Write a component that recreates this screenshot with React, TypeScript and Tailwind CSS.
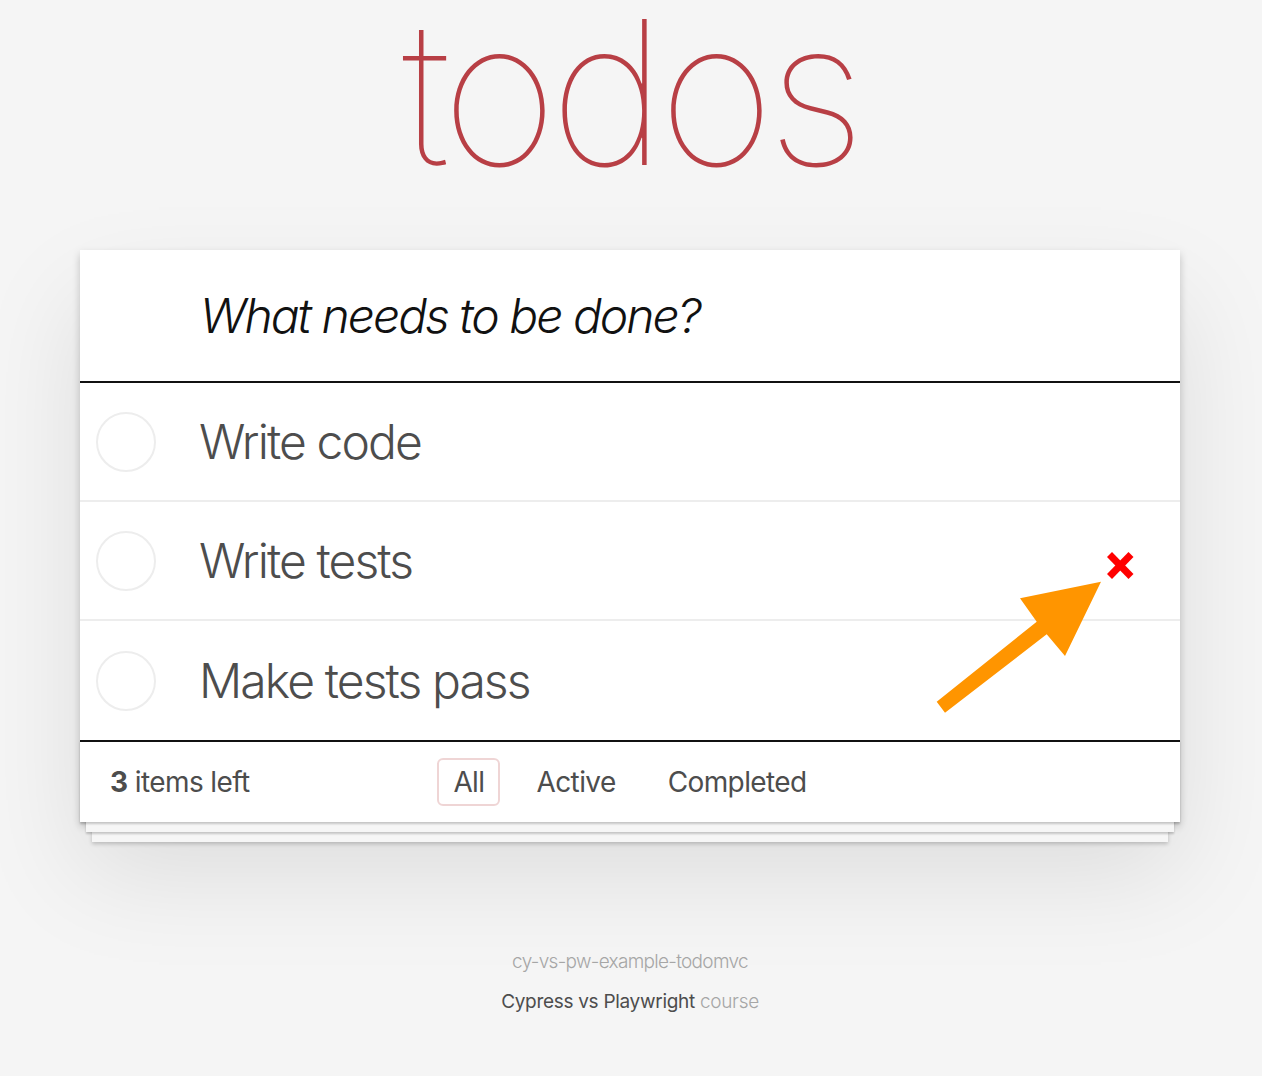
import React from 'react';

const todos = ['Write code', 'Write tests', 'Make tests pass'];

function Toggle() {
  return (
    <svg width="60" height="60" viewBox="0 0 60 60" className="shrink-0">
      <circle cx="30" cy="30" r="29" fill="none" stroke="#ededed" strokeWidth="2" />
    </svg>
  );
}

export default function App() {
  return (
    <div className="min-h-[1076px] bg-[#f5f5f5] font-['Inter','Helvetica_Neue',sans-serif]">
      <div className="relative w-[1260px] pb-[40px]">
        <div className="flex h-[250px] flex-col">
          <h1 className="-mt-[8px] text-center text-[200px] leading-[200px] font-thin text-[#b83f45] tracking-[-7.5px]">
            todos
          </h1>
        </div>

        <section className="mx-auto w-[1100px] bg-white shadow-[0_4px_8px_0_rgba(0,0,0,0.2),0_50px_100px_0_rgba(0,0,0,0.1)]">
          <div className="h-[133px] border-b-2 border-[#111]">
            <input
              className="h-[131px] w-full pl-[120px] pr-8 text-[48px] leading-[131px] italic font-light text-[#111] outline-none placeholder:text-[#111] tracking-[-2px]"
              placeholder="What needs to be done?"
            />
          </div>

          <ul>
            {todos.map((t, i) => (
              <li
                key={t}
                className={`flex h-[119px] items-center pl-[16px] ${i < todos.length - 1 ? 'border-b-2 border-[#ededed]' : ''}`}
              >
                <Toggle />
                <span className="ml-[43px] text-[48px] font-light text-[#4d4d4d] tracking-[-1.9px]">{t}</span>
              </li>
            ))}
          </ul>

          <footer className="relative flex h-[82px] items-center border-t-2 border-[#111] pl-[30px] text-[28px] tracking-[-0.6px] text-[#4d4d4d] shadow-[0_2px_2px_rgba(0,0,0,0.2),0_16px_0_-6px_#f6f6f6,0_18px_2px_-6px_rgba(0,0,0,0.2),0_32px_0_-12px_#f6f6f6,0_34px_4px_-12px_rgba(0,0,0,0.2)]">
            <span>
              <strong className="font-bold">3</strong> items left
            </span>
            <div className="absolute inset-x-0 flex justify-center gap-[20px]">
              <a className="rounded-[6px] border-2 border-[rgba(175,47,47,0.2)] px-[14px] py-[4px] leading-[36px]">All</a>
              <a className="rounded-[6px] border-2 border-transparent px-[14px] py-[4px] leading-[36px]">Active</a>
              <a className="rounded-[6px] border-2 border-transparent px-[14px] py-[4px] leading-[36px]">Completed</a>
            </div>
          </footer>
        </section>

        <div className="mt-[120px] text-center text-[19px] leading-[40px] font-light">
          <p className="text-[#a6a6a6] tracking-[-0.7px]">cy-vs-pw-example-todomvc</p>
          <p className="text-[#a6a6a6] tracking-[-0.3px]">
            <span className="font-normal text-[#4d4d4d]">Cypress vs Playwright</span> course
          </p>
        </div>

        <svg className="pointer-events-none absolute left-0 top-0" width="1260" height="1076">
          <polygon
            points="936.7,701.7 1036.7,621.7 1020,598.3 1101,581.7 1065,656 1046.7,634.3 945,712.7"
            fill="#ff9500"
          />
          <line x1="1109.5" y1="554.5" x2="1131" y2="576.5" stroke="#ff0000" strokeWidth="7" />
          <line x1="1131" y1="554.5" x2="1109.5" y2="576.5" stroke="#ff0000" strokeWidth="7" />
        </svg>
      </div>
    </div>
  );
}
